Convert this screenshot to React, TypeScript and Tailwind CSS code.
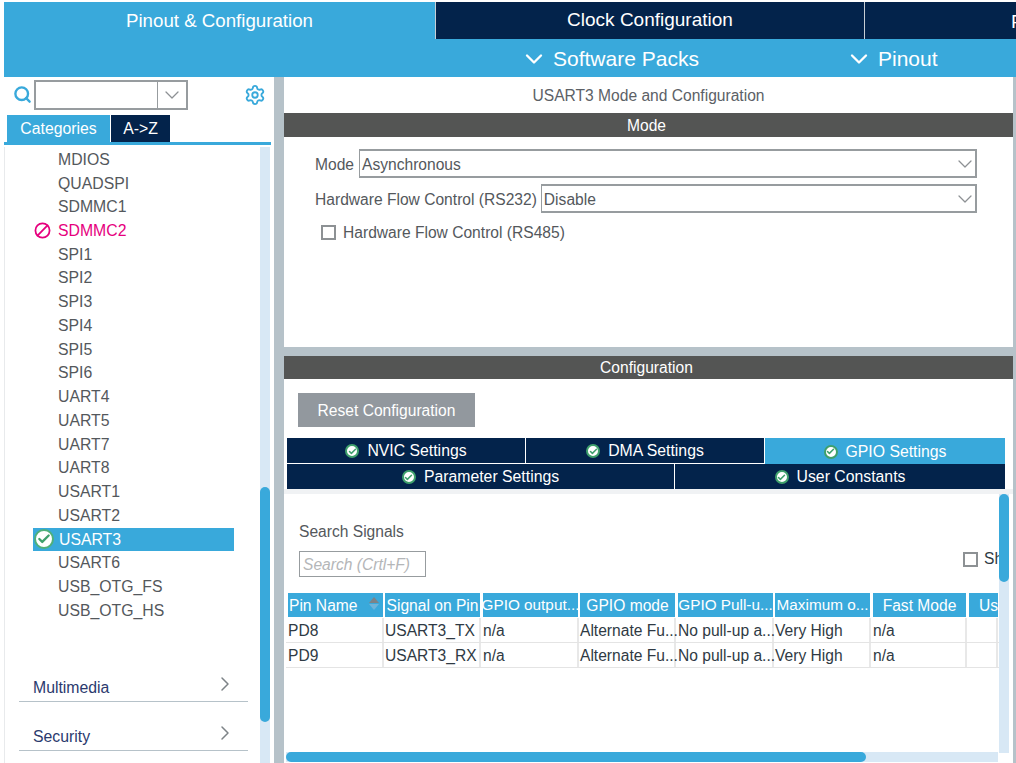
import { Ban, Check, ChevronDown, ChevronRight, Search, Settings } from 'lucide-react';

const peripherals = [
  'MDIOS', 'QUADSPI', 'SDMMC1', 'SDMMC2', 'SPI1', 'SPI2', 'SPI3', 'SPI4', 'SPI5', 'SPI6',
  'UART4', 'UART5', 'UART7', 'UART8', 'USART1', 'USART2', 'USART3', 'USART6', 'USB_OTG_FS', 'USB_OTG_HS',
];

const columns = [
  { title: 'Pin Name', width: 'w-[98px]', cell: 'pl-[2px]', head: 'ml-[2px] mr-[1px] pl-[1px] justify-start' },
  { title: 'Signal on Pin', width: 'w-[97px]', cell: 'pl-[1px]', head: 'ml-[1px] mr-[1px] justify-center' },
  { title: 'GPIO output...', width: 'w-[98px]', cell: 'pl-[2px]', head: 'ml-[2px] mr-[1px] justify-center text-[15.3px]' },
  { title: 'GPIO mode', width: 'w-[97px]', cell: 'pl-[1px]', head: 'ml-[1px] mr-[1px] justify-center' },
  { title: 'GPIO Pull-u...', width: 'w-[98px]', cell: 'pl-[2px]', head: 'ml-[2px] mr-[1px] justify-center text-[15.3px]' },
  { title: 'Maximum o...', width: 'w-[97px]', cell: 'pl-[1px]', head: 'ml-[1px] mr-[1px] justify-center text-[15.3px]' },
  { title: 'Fast Mode', width: 'w-[96px]', cell: 'pl-[2px]', head: 'ml-[2px] mr-[1px] justify-center' },
  { title: 'User Label', width: 'w-[31px]', cell: 'pl-[2px]', head: 'ml-[2px] justify-start pl-[10px]' },
];

const rows = [
  ['PD8', 'USART3_TX', 'n/a', 'Alternate Fu...', 'No pull-up a...', 'Very High', 'n/a', ''],
  ['PD9', 'USART3_RX', 'n/a', 'Alternate Fu...', 'No pull-up a...', 'Very High', 'n/a', ''],
];

function CheckDot({ size }: { size: 'sm' | 'lg' }) {
  return (
    <span
      className={
        size === 'lg'
          ? 'flex h-[20px] w-[20px] shrink-0 items-center justify-center rounded-full border-[2px] border-[#4fb07a] bg-white'
          : 'flex h-[14px] w-[14px] shrink-0 items-center justify-center rounded-full border-[2px] border-[#3fa06c] bg-white'
      }
    >
      <Check className={size === 'lg' ? 'h-[14px] w-[14px] text-[#3fa06c]' : 'h-[9px] w-[9px] text-[#3fa06c]'} strokeWidth={4} />
    </span>
  );
}

function SelectBox({ value, width }: { value: string; width: string }) {
  return (
    <div className={`flex h-[29px] shrink-0 items-center justify-between border-[2px] border-l-[1px] border-[#979c9f] pl-[2px] ${width}`}>
      <span className="pt-[2px]">{value}</span>
      <ChevronDown className="-mr-[2px] h-[24px] w-[24px] shrink-0 text-[#8d9194]" strokeWidth={1.25} />
    </div>
  );
}

function Tab({ label, width, active }: { label: string; width: string; active?: boolean }) {
  return (
    <div
      className={`flex items-center justify-center gap-[8px] pt-[1px] text-[15.8px] ${width} ${
        active ? 'h-[26px] bg-[#39a9db]' : 'h-full bg-[#03234b]'
      } text-white`}
    >
      <CheckDot size="sm" />
      <span>{label}</span>
    </div>
  );
}

function Category({ label }: { label: string }) {
  return (
    <div className="mb-[10px] ml-[14px] mr-[26px] flex h-[39px] items-end justify-between border-b border-[#b6c2c9] pb-[2px] pl-[14px] text-[#2b3a6e]">
      <span>{label}</span>
      <ChevronRight className="mb-[3px] mr-[11px] h-[24px] w-[24px] text-[#7d8387]" strokeWidth={1.5} />
    </div>
  );
}

export default function App() {
  return (
    <div
      className="h-[763px] w-[1016px] overflow-hidden bg-white pt-[2px] text-[15.6px] text-[#54585c]"
      style={{ fontFamily: '"Liberation Sans", Arial, sans-serif' }}
    >
      {/* top navigation */}
      <div className="ml-[4px] flex h-[75px] text-white">
        <div className="flex h-full w-[431px] shrink-0 justify-center bg-[#39a9db] pt-[5px] text-[18.7px]">
          Pinout &amp; Configuration
        </div>
        <div className="flex flex-1 flex-col">
          <div className="flex h-[37px] whitespace-nowrap bg-[#03234b] text-[19px]">
            <div className="flex w-[430px] shrink-0 items-center justify-center border-l border-r border-[#c8ced4] pb-[1px]">
              Clock Configuration
            </div>
            <div className="flex-1 pl-[146px] pt-[6px]">Project Manager</div>
          </div>
          <div className="flex h-[38px] items-center bg-[#39a9db] pt-[1px] text-[21px]">
            <div className="ml-[85px] flex w-[325px] shrink-0 items-center gap-[5px]">
              <ChevronDown className="h-[28px] w-[28px]" strokeWidth={2} />
              Software Packs
            </div>
            <div className="flex items-center gap-[5px]">
              <ChevronDown className="h-[28px] w-[28px]" strokeWidth={2} />
              Pinout
            </div>
          </div>
        </div>
      </div>

      <div className="flex h-[686px]">
        {/* left panel */}
        <div className="ml-[4px] flex w-[270px] shrink-0 flex-col text-[15.8px]">
          <div className="flex h-[33px] items-center pt-[2px]">
            <Search className="ml-[9px] h-[19px] w-[19px] text-[#39a9db]" strokeWidth={3} />
            <div className="ml-[2px] flex h-[30px] w-[154px] border-[2px] border-[#979c9f]">
              <div className="flex-1 border-r border-[#979c9f]" />
              <div className="flex w-[28px] items-center justify-center">
                <ChevronDown className="h-[24px] w-[24px] text-[#8d9194]" strokeWidth={1.25} />
              </div>
            </div>
            <Settings className="ml-[56px] h-[22px] w-[22px] text-[#39a9db]" strokeWidth={2} />
          </div>
          <div className="mt-[5px] flex h-[27px] gap-[1px] pl-[3px]">
            <div className="flex w-[103px] items-center justify-center bg-[#39a9db] text-white">Categories</div>
            <div className="flex w-[59px] items-center justify-center bg-[#03234b] text-white">A-&gt;Z</div>
          </div>
          <div className="h-[3px] w-[267px] bg-[#39a9db]" />
          <div className="relative mt-[2px] flex-1 border-l border-[#e8eaec]">
            <div className="w-[229px] pt-[0.8px]">
              {peripherals.map((name) => {
                if (name === 'USART3') {
                  return (
                    <div key={name} className="ml-[28px] flex h-[23.74px] items-center bg-[#39a9db] pl-[1px] text-white">
                      <CheckDot size="lg" />
                      <span className="ml-[5px]">{name}</span>
                    </div>
                  );
                }
                return (
                  <div
                    key={name}
                    className={`relative flex h-[23.74px] items-center pl-[53px] ${name === 'SDMMC2' ? 'text-[#e6007e]' : ''}`}
                  >
                    {name === 'SDMMC2' && (
                      <Ban className="absolute left-[29px] h-[17px] w-[17px] -scale-x-100 text-[#e6007e]" strokeWidth={2.5} />
                    )}
                    {name}
                  </div>
                );
              })}
            </div>
            <div className="mt-[41px]">
              <Category label="Multimedia" />
              <Category label="Security" />
            </div>
            <div className="absolute right-[4px] top-0 h-full w-[10px] bg-[#d8e8f5]">
              <div className="absolute top-[340px] h-[235px] w-[10px] rounded-b-[5px] rounded-t-[5px] bg-[#39a9db]" />
            </div>
          </div>
        </div>

        {/* right panel */}
        <div className="flex w-[742px] flex-col border-l-[10px] border-r-[3px] border-[#b6c2c9]">
          <div className="flex h-[36px] items-center justify-center pt-[2px] text-[#5c6166]">USART3 Mode and Configuration</div>
          <div className="flex h-[24px] items-center justify-center bg-[#545554] pr-[4px] pt-[1px] text-white">Mode</div>
          <div className="flex h-[210px] flex-col whitespace-nowrap pl-[31px] pt-[12px]">
            <div className="flex items-center gap-[5px]">
              <span className="pt-[2px]">Mode</span>
              <SelectBox value="Asynchronous" width="w-[618px]" />
            </div>
            <div className="mt-[6px] flex items-center gap-[4px]">
              <span className="pt-[2px]">Hardware Flow Control (RS232)</span>
              <SelectBox value="Disable" width="w-[436px]" />
            </div>
            <div className="ml-[6px] mt-[8px] flex items-center gap-[7px]">
              <span className="h-[15px] w-[15px] border-[2px] border-[#8d9194]" />
              <span>Hardware Flow Control (RS485)</span>
            </div>
          </div>
          <div className="h-[9px] bg-[#b6c2c9]" />
          <div className="flex h-[23px] items-center justify-center bg-[#545554] pr-[4px] text-white">Configuration</div>
          <div className="pl-[14px] pt-[14px]">
            <button className="h-[34px] w-[177px] bg-[#92989e] pt-[1px] text-white">Reset Configuration</button>
          </div>

          <div className="ml-[3px] mr-[8px] mt-[11px]">
            <div className="flex h-[25px] gap-[1px]">
              <Tab label="NVIC Settings" width="w-[238px]" />
              <Tab label="DMA Settings" width="w-[238px]" />
              <div className="relative flex-1">
                <Tab label="GPIO Settings" width="w-full" active />
              </div>
            </div>
            <div className="mt-px flex h-[25px] gap-[1px]">
              <Tab label="Parameter Settings" width="w-[387px]" />
              <Tab label="User Constants" width="flex-1" />
            </div>
          </div>
          <div className="h-[5px] bg-[#f0f2f4]" />

          {/* GPIO signal table */}
          <div className="relative flex-1 overflow-hidden pl-[2px]">
            <div className="w-[714px] overflow-hidden">
              <div className="pl-[13px] pt-[26px]">Search Signals</div>
              <div className="relative pl-[13px] pt-[8px]">
                <div className="flex h-[26px] w-[127px] items-center border border-[#979c9f] pl-[3px] italic text-[#b4b6b8]">
                  Search (Crtl+F)
                </div>
                <div className="absolute left-[677px] top-[4px] flex items-center gap-[6px] whitespace-nowrap text-[#2f3a44]">
                  <span className="h-[15px] w-[15px] border-[2px] border-[#8d9194]" />
                  <span>Show</span>
                </div>
              </div>
              <div className="mt-[16px] flex h-[25px] whitespace-nowrap">
                {columns.map((col) => (
                  <div key={col.title} className={`${col.width} shrink-0 overflow-hidden`}>
                    <div className={`relative flex h-[24px] items-center overflow-hidden bg-[#39a9db] text-white ${col.head}`}>
                      {col.title}
                      {col.title === 'Pin Name' && (
                        <span className="absolute right-[4px] top-[4px] flex flex-col gap-[1px]">
                          <span className="h-0 w-0 border-x-[5px] border-b-[6px] border-x-transparent border-b-[#7d8387]" />
                          <span className="h-0 w-0 border-x-[5px] border-t-[6px] border-x-transparent border-t-[#6fb4d9]" />
                        </span>
                      )}
                    </div>
                  </div>
                ))}
              </div>
              {rows.map((row) => (
                <div key={row[0]} className="flex h-[25px] whitespace-nowrap border-b-[1.5px] border-[#e4e4e4] text-[#2f3a44]">
                  {row.map((cell, i) => (
                    <div
                      key={i}
                      className={`${columns[i].width} ${columns[i].cell} flex shrink-0 items-center border-r-[2px] border-[#e8e8e8]`}
                    >
                      {cell}
                    </div>
                  ))}
                </div>
              ))}
            </div>

            <div className="absolute left-[715px] top-0 h-[259px] w-[10px] bg-[#d8e8f5]">
              <div className="h-[88px] w-[10px] rounded-[5px] bg-[#39a9db]" />
            </div>
            <div className="absolute bottom-[1px] left-[2px] h-[10px] w-[712px] bg-[#d8e8f5]">
              <div className="h-[10px] w-[580px] rounded-[5px] bg-[#39a9db]" />
            </div>
          </div>
        </div>
      </div>
    </div>
  );
}
